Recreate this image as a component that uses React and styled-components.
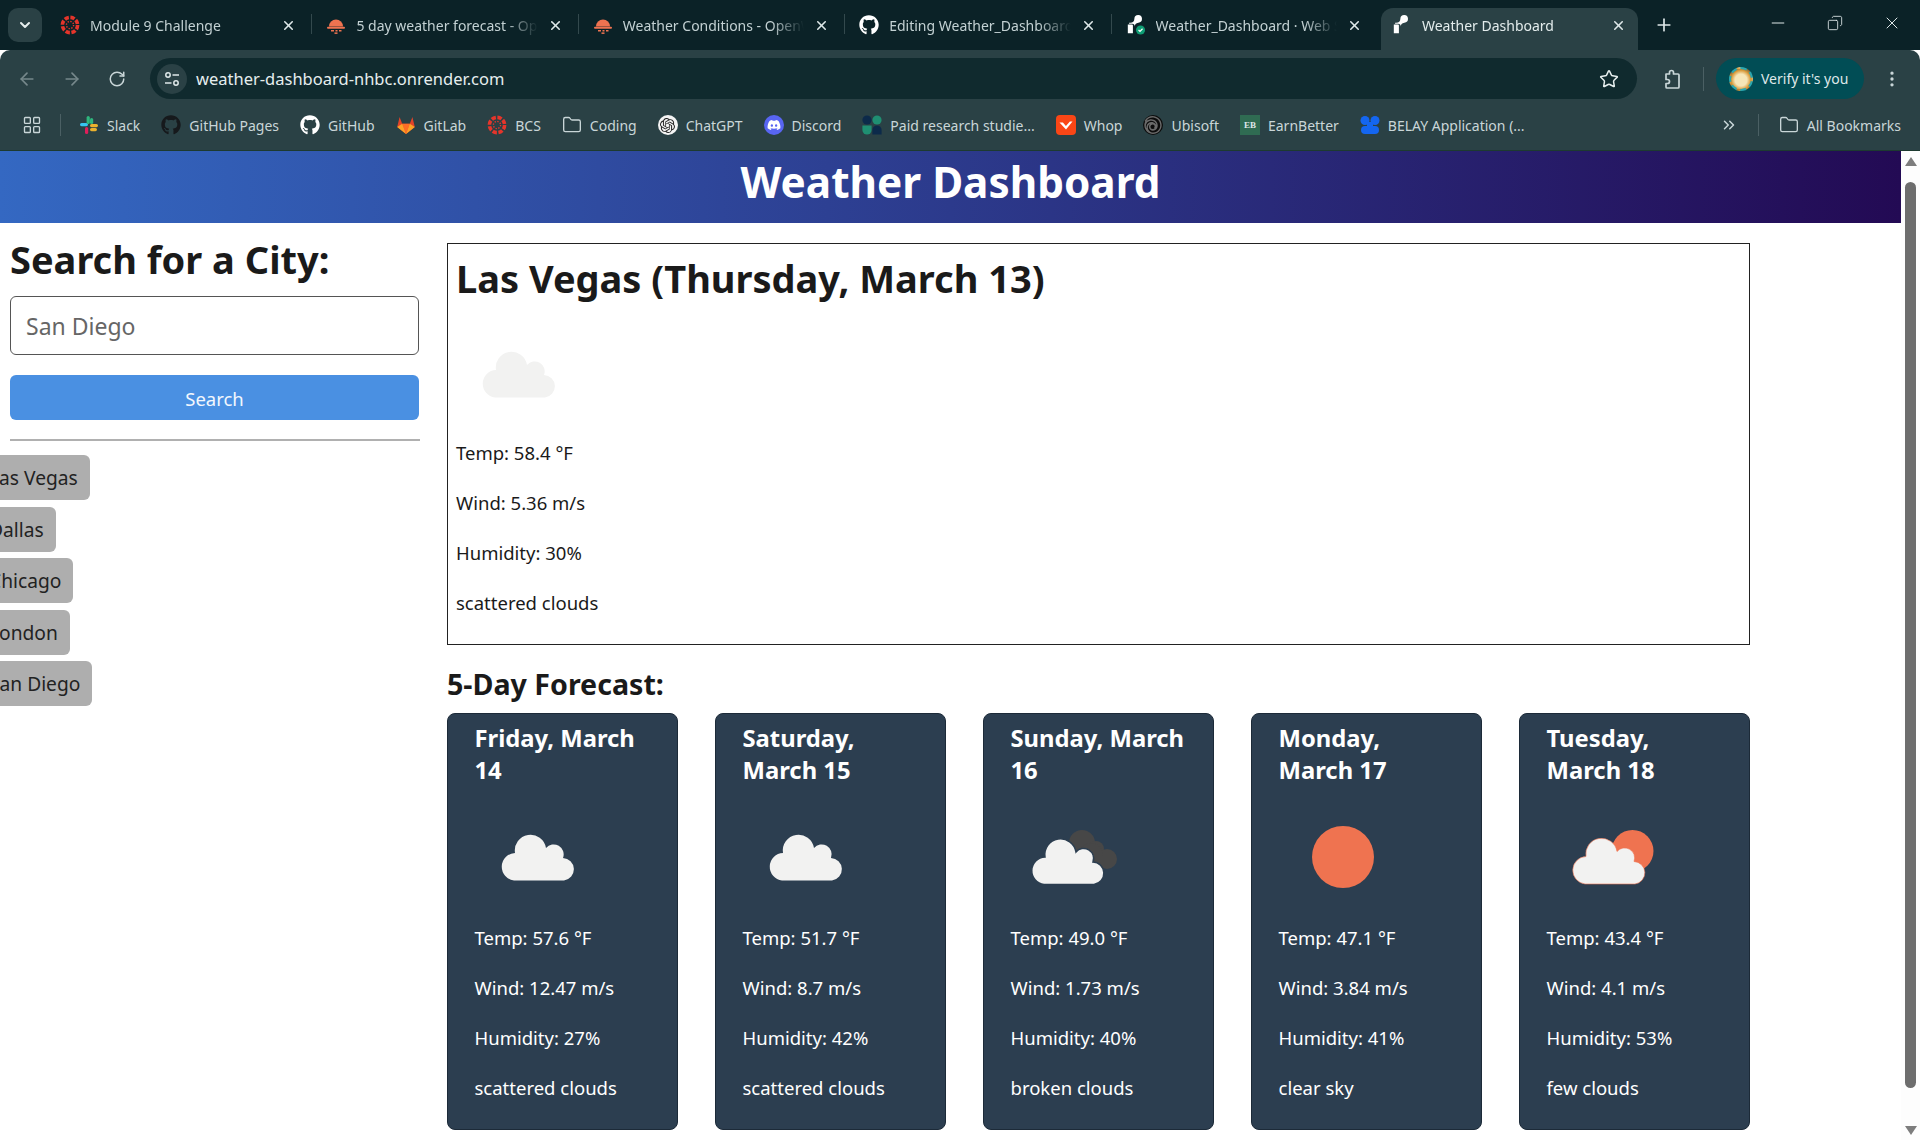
import React from 'react';
import styled, { createGlobalStyle } from 'styled-components';
import {
  ArrowLeft, ArrowRight, RotateCw, X, Plus, Minus, ChevronDown, ChevronsRight,
  Star, EllipsisVertical, Folder, LayoutGrid, Copy,
} from 'lucide-react';
import { FaGithub, FaDiscord } from 'react-icons/fa';
import { SiOpenai, SiUbisoft } from 'react-icons/si';

const FONT = `'Noto Sans', 'Open Sans', sans-serif`;

const GlobalStyle = createGlobalStyle`
  html, body {
    margin: 0;
    padding: 0;
    height: 100%;
    overflow: hidden;
    background: #fff;
    font-family: ${FONT};
  }
  * { box-sizing: border-box; }
`;

const Window = styled.div`
  width: 1920px;
  height: 1140px;
  display: flex;
  flex-direction: column;
  overflow: hidden;
`;

/* ---------- browser chrome ---------- */

const TabStrip = styled.div`
  height: 50px;
  flex: none;
  background: #0b2227;
  display: flex;
  align-items: flex-end;
  padding-left: 8px;
  position: relative;
`;

const TabSearch = styled.div`
  width: 34px;
  height: 34px;
  margin: 0 4px 8px 0;
  border-radius: 10px;
  background: #2a4145;
  color: #e6eeee;
  display: flex;
  align-items: center;
  justify-content: center;
`;

const Tab = styled.div`
  width: 266.4px;
  height: 42px;
  flex: none;
  display: flex;
  align-items: center;
  gap: 10px;
  padding: 0 ${(p) => (p.$active ? 18 : 16)}px 8px 14px;
  position: relative;
  color: #c3d1d3;
  font-size: 14px;

  ${(p) => !p.$active && !p.$noDivider && `
    &::after {
      content: '';
      position: absolute;
      right: 0;
      top: 6px;
      width: 1px;
      height: 20px;
      background: #33494d;
    }
  `}

  ${(p) => p.$active && `
    color: #e3ecec;
    &::before {
      content: '';
      position: absolute;
      z-index: 0;
      left: 3px;
      right: 6px;
      top: 0;
      bottom: 0;
      background: #2a4145;
      border-radius: 12px 12px 0 0;
    }
  `}
`;

const TabIcon = styled.span`
  width: 20px;
  height: 20px;
  flex: none;
  display: flex;
  align-items: center;
  justify-content: center;
  position: relative;
  z-index: 1;
`;

const TabTitle = styled.span`
  flex: 1;
  min-width: 0;
  white-space: nowrap;
  overflow: hidden;
  position: relative;
  z-index: 1;
  mask-image: linear-gradient(90deg, #000 82%, transparent 100%);
`;

const TabClose = styled.span`
  flex: none;
  display: flex;
  position: relative;
  z-index: 1;
  color: #dfe8e9;
`;

const NewTab = styled.div`
  width: 30px;
  height: 30px;
  margin: 0 0 10px 5px;
  color: #dfe8e9;
  display: flex;
  align-items: center;
  justify-content: center;
`;

const WindowControls = styled.div`
  margin-left: auto;
  height: 50px;
  display: flex;
  align-self: flex-start;
  align-items: center;
  color: #dfe8e9;
`;

const WindowButton = styled.div`
  width: 57px;
  display: flex;
  justify-content: center;
  padding-bottom: 4px;
`;

const RestoreGlyph = styled(Copy)`
  transform: scaleX(-1);
`;

const Toolbar = styled.div`
  height: 50px;
  flex: none;
  background: #2a4145;
  border-radius: 10px 10px 0 0;
  display: flex;
  align-items: center;
  padding: 7px 14px 0 14px;
  color: #c9d6d8;
`;

const NavButton = styled.div`
  width: 26px;
  height: 26px;
  margin-right: 19px;
  display: flex;
  align-items: center;
  justify-content: center;
  color: ${(p) => (p.$dim ? '#76888b' : '#c9d6d8')};
`;

const Omnibox = styled.div`
  width: 1487px;
  height: 41px;
  margin-left: 1px;
  border-radius: 21px;
  background: #102a2e;
  display: flex;
  align-items: center;
  padding: 0 18px 0 7px;
`;

const SiteInfo = styled.div`
  width: 30px;
  height: 30px;
  border-radius: 50%;
  background: #2a4145;
  display: flex;
  align-items: center;
  justify-content: center;
  margin-right: 9px;
`;

const Url = styled.span`
  flex: 1;
  font-size: 16.5px;
  color: #e6eeee;
`;

const ToolbarIcon = styled.div`
  display: flex;
  margin-left: 24px;
`;

const ToolbarDivider = styled.div`
  width: 1px;
  height: 24px;
  background: #4b6064;
  margin: 0 12px 0 20px;
`;

const ProfilePill = styled.div`
  width: 148px;
  height: 41px;
  border-radius: 21px;
  background: #014d55;
  display: flex;
  align-items: center;
  gap: 8px;
  padding-left: 13px;
  font-size: 14px;
  color: #dfe8e9;
`;

const Avatar = styled.div`
  width: 24px;
  height: 24px;
  border-radius: 50%;
  border: 2px dashed #2aa7b0;
  background: radial-gradient(circle at 50% 55%, #f6e6b8 0 40%, #d99a3a 65%, #3b3b3b 100%);
`;

const MenuDots = styled.div`
  display: flex;
  margin-left: 18px;
`;

const BookmarkBar = styled.div`
  height: 51px;
  flex: none;
  background: #2a4145;
  border-bottom: 1px solid #1d3a30;
  display: flex;
  align-items: center;
  padding: 0 19px 0 22px;
  color: #c9d6d8;
  font-size: 14px;
`;

const BarDivider = styled.div`
  width: 1px;
  height: 22px;
  background: #4b6064;
  margin: ${(p) => p.$margin};
`;

const Bookmarks = styled.div`
  display: flex;
  align-items: center;
  gap: 21px;
`;

const Bookmark = styled.div`
  display: flex;
  align-items: center;
  gap: 8px;
  white-space: nowrap;
`;

const BarEnd = styled.div`
  margin-left: auto;
  display: flex;
  align-items: center;
`;

/* ---------- page ---------- */

const Viewport = styled.div`
  flex: 1;
  min-height: 0;
  display: flex;
  overflow: hidden;
`;

const Page = styled.div`
  flex: 1;
  min-width: 0;
  color: #1a1a1a;
`;

const Header = styled.header`
  height: 72px;
  padding-bottom: 12px;
  background: linear-gradient(90deg, #3468c2 0%, #2c3a8c 50%, #230a54 100%);
  display: flex;
  align-items: center;
  justify-content: center;
`;

const Title = styled.h1`
  margin: 0;
  font-size: 42.3px;
  font-weight: 700;
  color: #fff;
`;

const Main = styled.main`
  display: grid;
  grid-template-columns: 447px 1303px;
  align-items: start;
`;

const Sidebar = styled.aside`
  padding: 12px 0 0 10px;
`;

const SearchTitle = styled.h2`
  margin: 0 0 13px;
  font-size: 38px;
  line-height: 48px;
  font-weight: 700;
`;

const CityInput = styled.input`
  display: block;
  width: 409px;
  height: 59px;
  padding: 0 15px;
  border: 1px solid #555;
  border-radius: 6px;
  background: #fff;
  font-family: ${FONT};
  font-size: 23px;
  color: #666;
`;

const SearchButton = styled.button`
  display: block;
  width: 409px;
  height: 45px;
  margin-top: 20px;
  padding: 1px 0 0;
  border: 0;
  border-radius: 6px;
  background: #4a90e2;
  color: #f2f7fd;
  font-family: ${FONT};
  font-size: 18.5px;
`;

const Rule = styled.hr`
  width: 410px;
  height: 2px;
  margin: 19px 0 14px;
  border: 0;
  background: #b0b0b0;
`;

const HistoryList = styled.div`
  display: flex;
  flex-direction: column;
  align-items: flex-start;
  gap: 6.5px;
`;

const HistoryButton = styled.button`
  height: 45px;
  margin-left: -33px;
  padding: 0 12px;
  border: 0;
  border-radius: 6px;
  background: #aeaeae;
  color: #222;
  font-family: ${FONT};
  font-size: 19.2px;
`;

const Content = styled.section`
  padding-top: 20px;
`;

const TodayCard = styled.div`
  height: 402px;
  border: 1px solid #222;
  padding: 10px 8px 0;
`;

const CityTitle = styled.h2`
  margin: 0 0 8px;
  font-size: 38px;
  line-height: 48px;
  font-weight: 700;
`;

const WeatherIcon = styled.svg`
  display: block;
  width: 128px;
  height: 128px;
  margin-bottom: ${(p) => p.$gap}px;
`;

const Stat = styled.p`
  margin: 0 0 20px;
  font-size: 18.5px;
  line-height: 30px;
`;

const ForecastTitle = styled.h3`
  margin: 19px 0 9px;
  font-size: 28.6px;
  line-height: 40px;
  font-weight: 700;
`;

const ForecastRow = styled.div`
  display: flex;
  justify-content: space-between;
`;

const ForecastCard = styled.div`
  width: 231px;
  height: 417px;
  padding: 8px 25px 0 26.5px;
  border: 1px solid #1c2a38;
  border-radius: 8px;
  background: #2c3e50;
  color: #fff;
`;

const ForecastDate = styled.h4`
  margin: 0 0 7px;
  font-size: 23.8px;
  line-height: 32px;
  font-weight: 700;
`;

/* ---------- drawings ---------- */

const CLOUD = 'M39 87.5A13.8 13.8 0 0 1 40 60A15.5 15.5 0 0 1 71 55A10 10 0 0 1 88 65A11.3 11.3 0 0 1 89 87.5Z';

const ScatteredIcon = ({ gap }) => (
  <WeatherIcon viewBox="0 0 128 128" $gap={gap}>
    <path d={CLOUD} fill="#f2f2f1" />
  </WeatherIcon>
);

const BrokenIcon = ({ gap }) => (
  <WeatherIcon viewBox="0 0 128 128" $gap={gap}>
    <g fill="#474747">
      <circle cx="71" cy="50" r="13" />
      <circle cx="85" cy="56" r="8" />
      <circle cx="96" cy="66" r="10" />
      <circle cx="80" cy="62" r="12" />
    </g>
    <path d={CLOUD} fill="#f2f2f1" stroke="#2c3e50" strokeWidth="1.5" transform="translate(-6 4)" />
  </WeatherIcon>
);

const ClearIcon = ({ gap }) => (
  <WeatherIcon viewBox="0 0 128 128" $gap={gap}>
    <circle cx="64" cy="64" r="31" fill="#ef7350" />
  </WeatherIcon>
);

const FewIcon = ({ gap }) => (
  <WeatherIcon viewBox="0 0 128 128" $gap={gap}>
    <circle cx="85.5" cy="58" r="21" fill="#ef7350" />
    <path d={CLOUD} fill="#f2f2f1" stroke="#ef7350" strokeWidth=".6" transform="translate(-1 3.5)" />
  </WeatherIcon>
);

const CanvasLogo = ({ size = 20 }) => (
  <svg width={size} height={size} viewBox="0 0 20 20">
    <circle cx="10" cy="10" r="7.6" fill="none" stroke="#e5352b" strokeWidth="3.6" strokeDasharray="4.4 1.6" />
    <circle cx="10" cy="10" r="3.6" fill="none" stroke="#e5352b" strokeWidth="1.4" strokeDasharray="1.4 1.4" />
  </svg>
);

const OpenWeatherLogo = () => (
  <svg width="20" height="20" viewBox="0 0 20 20" fill="#ef7350">
    <path d="M3 11.5a7 7 0 0 1 14 0Z" />
    <rect x="1" y="11.8" width="18" height="2" rx="1" />
    <rect x="5" y="15" width="3" height="1.5" />
    <rect x="9.5" y="15" width="2" height="1.5" />
    <rect x="13" y="15" width="2.5" height="1.5" />
    <rect x="8.5" y="17.4" width="3" height="1.5" />
  </svg>
);

const RenderLogo = ({ badge }) => (
  <svg width="22" height="22" viewBox="0 0 22 22">
    <path d="M2 10.5h4.6a1 1 0 0 1 1 1V20H2Z" fill="#fff" />
    <path d="M9.6 20v-7a4.5 4.5 0 0 1 4-4.5 4.2 4.2 0 1 0-4.4-4.4A4.6 4.6 0 0 1 4.6 8.6H3.4V9.6h3.4a2.8 2.8 0 0 1 2.8 2.8Z" fill="#fff" />
    {badge && (
      <>
        <circle cx="16" cy="16.5" r="5" fill="#0f9d74" />
        <path d="M13.8 16.5l1.6 1.6 2.8-3" fill="none" stroke="#fff" strokeWidth="1.3" />
      </>
    )}
  </svg>
);

const SlackLogo = () => (
  <svg width="20" height="20" viewBox="0 0 20 20">
    <rect x="1" y="8" width="8" height="3.2" rx="1.6" fill="#36c5f0" />
    <rect x="7.6" y="1" width="3.2" height="8" rx="1.6" fill="#2eb67d" />
    <rect x="11" y="8" width="8" height="3.2" rx="1.6" fill="#ecb22e" transform="translate(0 1)" />
    <rect x="11" y="3" width="3.2" height="6" rx="1.6" fill="#2eb67d" />
    <rect x="6" y="12" width="3.2" height="7" rx="1.6" fill="#e01e5a" />
    <rect x="11" y="13" width="7" height="3.2" rx="1.6" fill="#ecb22e" />
  </svg>
);

const GitlabLogo = () => (
  <svg width="20" height="20" viewBox="0 0 20 20">
    <path d="M10 19 1.2 12 3.6 2l2.6 6.8h7.6L16.4 2l2.4 10Z" fill="#e24329" />
    <path d="M10 19 6.2 8.8h7.6Z" fill="#fc6d26" />
    <path d="M10 19 1.2 12l5-3.2ZM10 19l8.8-7-5-3.2Z" fill="#fca326" />
  </svg>
);

const ExtensionIcon = () => (
  <svg width="22" height="22" viewBox="0 0 22 22" fill="none" stroke="#c9d6d8" strokeWidth="1.7" strokeLinejoin="round">
    <path d="M5 6h3.5V4.5a2 2 0 0 1 4 0V6H17a1 1 0 0 1 1 1v12a1 1 0 0 1-1 1H6a1 1 0 0 1-1-1v-3.5H6.5a2 2 0 0 0 0-4H5Z" />
  </svg>
);

const LogoDisc = styled.span`
  width: 20px;
  height: 20px;
  border-radius: 50%;
  background: ${(p) => p.$bg};
  color: ${(p) => p.$fg};
  display: flex;
  align-items: center;
  justify-content: center;
`;

const PaidLogo = () => (
  <svg width="20" height="20" viewBox="0 0 20 20">
    <circle cx="5" cy="5" r="4.6" fill="#0c2a4a" />
    <circle cx="15" cy="5" r="4.6" fill="#1f8f72" />
    <path d="M.4 10.4h9.2V15a4.6 4.6 0 0 1-9.2 0Z" fill="#1f8f72" />
    <path d="M10.4 15a4.6 4.6 0 0 1 9.2 0v4.6h-9.2Z" fill="#0c2a4a" />
  </svg>
);

const WhopLogo = () => (
  <svg width="20" height="20" viewBox="0 0 20 20">
    <rect width="20" height="20" rx="4" fill="#fa4616" />
    <path d="M3.5 7.5l3.4 0 3 3.4 4-4.4h2.6L10 14.5Z" fill="#fff" />
  </svg>
);

const EarnBetterMark = styled.span`
  width: 20px;
  height: 20px;
  background: #2f6b52;
  color: #dfe8e9;
  font-family: 'Liberation Serif', serif;
  font-size: 9px;
  font-weight: 700;
  display: flex;
  align-items: center;
  justify-content: center;
`;

const BelayLogo = () => (
  <svg width="20" height="20" viewBox="0 0 20 20" fill="#1466f0">
    <circle cx="5" cy="5.5" r="4.5" />
    <circle cx="15" cy="5.5" r="4.5" />
    <rect x="1" y="11" width="18" height="8" rx="4" />
    <rect x="7" y="7" width="6" height="5" />
  </svg>
);

const SiteInfoIcon = () => (
  <svg width="16" height="16" viewBox="0 0 16 16" fill="none" stroke="#dfe8e9" strokeWidth="1.5">
    <circle cx="4" cy="4" r="2.2" />
    <path d="M8.5 4H15M1 12h6.5" />
    <circle cx="12" cy="12" r="2.2" />
  </svg>
);

/* ---------- data ---------- */

const tabs = [
  { title: 'Module 9 Challenge', icon: <CanvasLogo /> },
  { title: '5 day weather forecast - OpenWeatherMap', icon: <OpenWeatherLogo /> },
  { title: 'Weather Conditions - OpenWeatherMap', icon: <OpenWeatherLogo /> },
  { title: 'Editing Weather_Dashboard/README.md', icon: <FaGithub size={20} color="#fff" /> },
  { title: 'Weather_Dashboard · Web Service', icon: <RenderLogo badge />, noDivider: true },
  { title: 'Weather Dashboard', icon: <RenderLogo />, active: true },
];

const bookmarks = [
  { label: 'Slack', icon: <SlackLogo /> },
  { label: 'GitHub Pages', icon: <FaGithub size={20} color="#16191c" /> },
  { label: 'GitHub', icon: <FaGithub size={20} color="#fff" /> },
  { label: 'GitLab', icon: <GitlabLogo /> },
  { label: 'BCS', icon: <CanvasLogo /> },
  { label: 'Coding', icon: <Folder size={20} strokeWidth={1.6} /> },
  { label: 'ChatGPT', icon: <LogoDisc $bg="#f4f4f4" $fg="#222"><SiOpenai size={15} /></LogoDisc> },
  { label: 'Discord', icon: <LogoDisc $bg="#5865f2" $fg="#fff"><FaDiscord size={14} /></LogoDisc> },
  { label: 'Paid research studie...', icon: <PaidLogo /> },
  { label: 'Whop', icon: <WhopLogo /> },
  { label: 'Ubisoft', icon: <LogoDisc $bg="#0c0c0c" $fg="#6a6a6a"><SiUbisoft size={18} /></LogoDisc> },
  { label: 'EarnBetter', icon: <EarnBetterMark>EB</EarnBetterMark> },
  { label: 'BELAY Application (...', icon: <BelayLogo /> },
];

const cities = ['Las Vegas', 'Dallas', 'Chicago', 'London', 'San Diego'];

const forecast = [
  { date: 'Friday, March 14', Icon: ScatteredIcon, temp: '57.6', wind: '12.47', humidity: 27, desc: 'scattered clouds' },
  { date: 'Saturday, March 15', Icon: ScatteredIcon, temp: '51.7', wind: '8.7', humidity: 42, desc: 'scattered clouds' },
  { date: 'Sunday, March 16', Icon: BrokenIcon, temp: '49.0', wind: '1.73', humidity: 40, desc: 'broken clouds' },
  { date: 'Monday, March 17', Icon: ClearIcon, temp: '47.1', wind: '3.84', humidity: 41, desc: 'clear sky' },
  { date: 'Tuesday, March 18', Icon: FewIcon, temp: '43.4', wind: '4.1', humidity: 53, desc: 'few clouds' },
];

/* ---------- scrollbar ---------- */

const ScrollTrack = styled.div`
  width: 19px;
  flex: none;
  background: #fdfdfd;
  display: flex;
  flex-direction: column;
  align-items: center;
  padding: 6px 0 5px;
`;

const ScrollArrow = styled.div`
  flex: none;
  width: 0;
  height: 0;
  border-left: 6px solid transparent;
  border-right: 6px solid transparent;
  ${(p) => (p.$down ? 'border-top: 9px solid #7d7d7d;' : 'border-bottom: 9px solid #7d7d7d;')}
`;

const ScrollThumb = styled.div`
  width: 11px;
  height: 906px;
  margin: 16px 0 38px;
  border-radius: 6px;
  background: #6d6d6d;
`;

const App = () => (
  <Window>
    <GlobalStyle />
    <TabStrip>
      <TabSearch><ChevronDown size={16} strokeWidth={3} /></TabSearch>
      {tabs.map((tab) => (
        <Tab key={tab.title} $active={tab.active} $noDivider={tab.noDivider}>
          <TabIcon>{tab.icon}</TabIcon>
          <TabTitle>{tab.title}</TabTitle>
          <TabClose><X size={15} strokeWidth={2.5} /></TabClose>
        </Tab>
      ))}
      <NewTab><Plus size={20} strokeWidth={2} /></NewTab>
      <WindowControls>
        <WindowButton><Minus size={20} strokeWidth={1.2} /></WindowButton>
        <WindowButton><RestoreGlyph size={16} strokeWidth={1.3} /></WindowButton>
        <WindowButton><X size={20} strokeWidth={1.2} /></WindowButton>
      </WindowControls>
    </TabStrip>

    <Toolbar>
      <NavButton $dim><ArrowLeft size={20} /></NavButton>
      <NavButton $dim><ArrowRight size={20} /></NavButton>
      <NavButton><RotateCw size={18} /></NavButton>
      <Omnibox>
        <SiteInfo><SiteInfoIcon /></SiteInfo>
        <Url>weather-dashboard-nhbc.onrender.com</Url>
        <Star size={20} color="#e6eeee" strokeWidth={1.8} />
      </Omnibox>
      <ToolbarIcon><ExtensionIcon /></ToolbarIcon>
      <ToolbarDivider />
      <ProfilePill>
        <Avatar />
        Verify it's you
      </ProfilePill>
      <MenuDots><EllipsisVertical size={20} /></MenuDots>
    </Toolbar>

    <BookmarkBar>
      <LayoutGrid size={20} strokeWidth={1.6} />
      <BarDivider $margin="0 18px 0 18px" />
      <Bookmarks>
        {bookmarks.map((b) => (
          <Bookmark key={b.label}>{b.icon}{b.label}</Bookmark>
        ))}
      </Bookmarks>
      <BarEnd>
        <ChevronsRight size={18} />
        <BarDivider $margin="0 20px 0 20px" />
        <Bookmark><Folder size={20} strokeWidth={1.6} />All Bookmarks</Bookmark>
      </BarEnd>
    </BookmarkBar>

    <Viewport>
      <Page>
        <Header><Title>Weather Dashboard</Title></Header>
        <Main>
          <Sidebar>
            <SearchTitle>Search for a City:</SearchTitle>
            <CityInput defaultValue="San Diego" />
            <SearchButton>Search</SearchButton>
            <Rule />
            <HistoryList>
              {cities.map((city) => <HistoryButton key={city}>{city}</HistoryButton>)}
            </HistoryList>
          </Sidebar>
          <Content>
            <TodayCard>
              <CityTitle>Las Vegas (Thursday, March 13)</CityTitle>
              <ScatteredIcon gap={0} />
              <Stat>Temp: 58.4 °F</Stat>
              <Stat>Wind: 5.36 m/s</Stat>
              <Stat>Humidity: 30%</Stat>
              <Stat>scattered clouds</Stat>
            </TodayCard>
            <ForecastTitle>5-Day Forecast:</ForecastTitle>
            <ForecastRow>
              {forecast.map(({ date, Icon, temp, wind, humidity, desc }) => (
                <ForecastCard key={date}>
                  <ForecastDate>{date}</ForecastDate>
                  <Icon gap={2} />
                  <Stat>Temp: {temp} °F</Stat>
                  <Stat>Wind: {wind} m/s</Stat>
                  <Stat>Humidity: {humidity}%</Stat>
                  <Stat>{desc}</Stat>
                </ForecastCard>
              ))}
            </ForecastRow>
          </Content>
        </Main>
      </Page>
      <ScrollTrack>
        <ScrollArrow />
        <ScrollThumb />
        <ScrollArrow $down />
      </ScrollTrack>
    </Viewport>
  </Window>
);

export default App;
